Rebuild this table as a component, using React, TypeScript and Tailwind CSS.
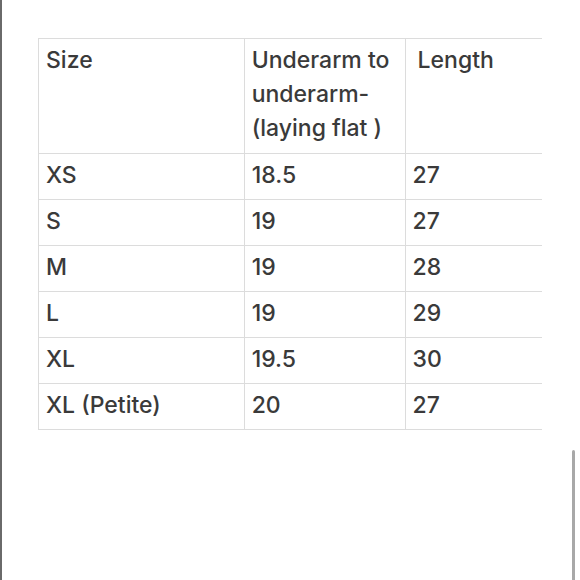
import React from "react";

const rows: [string, string, string][] = [
  ["XS", "18.5", "27"],
  ["S", "19", "27"],
  ["M", "19", "28"],
  ["L", "19", "29"],
  ["XL", "19.5", "30"],
  ["XL (Petite)", "20", "27"],
];

export default function App() {
  const head = "border border-[#dcdcdc] px-[7px] pt-[4px] pb-[8px] align-top";
  const cell = "border border-[#dcdcdc] px-[7px] pt-[4px] pb-[7px] align-top";
  return (
    <div
      className="relative w-[580px] h-[580px] bg-white overflow-hidden flex"
      style={{ fontFamily: "Inter, 'Noto Sans', sans-serif" }}
    >
      <div className="w-[2px] h-full bg-[#6a6a6a]" />
      <div className="flex-1 pl-[36px] pt-[38px]">
        <table className="border-collapse text-[23px] leading-[34px] text-[#3a3a3a] font-medium w-[504px]">
          <colgroup>
            <col className="w-[206px]" />
            <col className="w-[161px]" />
            <col className="w-[137px]" />
          </colgroup>
          <tbody>
            <tr>
              <td className={head}>Size</td>
              <td className={head}>
                Underarm to
                <br />
                underarm-
                <br />
                (laying flat )
              </td>
              <td className={head + " border-r-0 pl-[12px]"}>Length</td>
            </tr>
            {rows.map((r) => (
              <tr key={r[0]}>
                <td className={cell}>{r[0]}</td>
                <td className={cell}>{r[1]}</td>
                <td className={cell + " border-r-0"}>{r[2]}</td>
              </tr>
            ))}
          </tbody>
        </table>
      </div>
      <div className="absolute right-[5px] top-[450px] w-[3px] h-[140px] rounded-full bg-[#a8a8a8]" />
    </div>
  );
}
